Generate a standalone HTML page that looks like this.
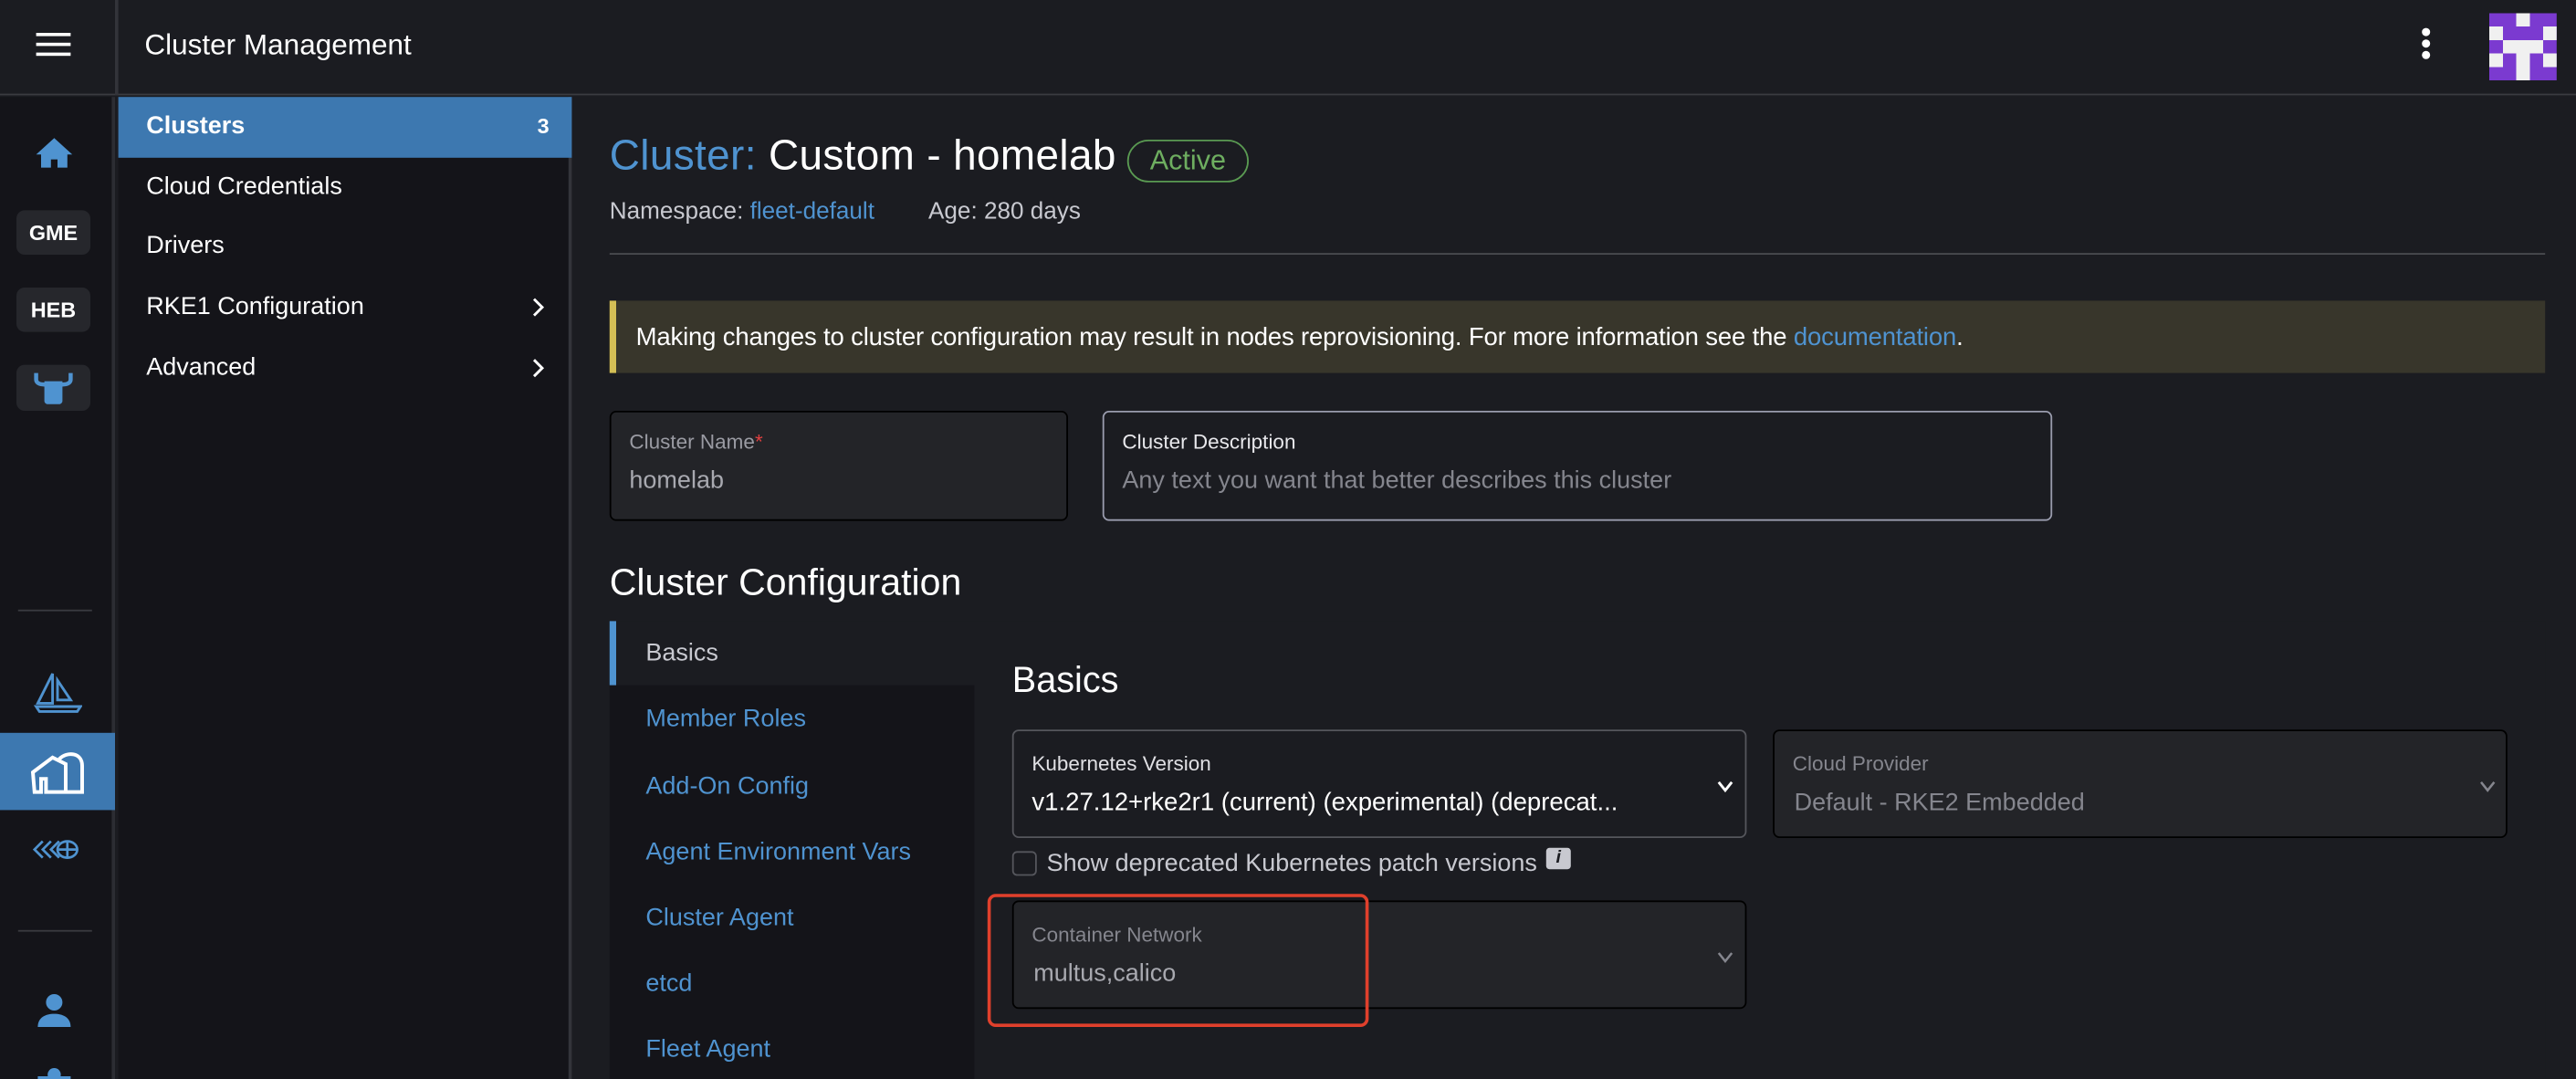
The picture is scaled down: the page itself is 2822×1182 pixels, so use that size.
<!DOCTYPE html>
<html><head><meta charset="utf-8"><style>
*{box-sizing:border-box;margin:0;padding:0}
html,body{width:2822px;height:1182px;overflow:hidden;background:#1b1c21}
#w{width:1568px;height:657px;transform:scale(1.8);transform-origin:0 0;position:relative;font-family:"Liberation Sans",sans-serif;color:#fff;background:#1b1c21}
.a{position:absolute}
.hdr{left:0;top:0;width:1568px;height:58px;background:#1b1c21;border-bottom:1px solid #3a3b40}
.lc{left:0;top:59px;width:70px;height:598px;background:#141419;border-right:2px solid #2c2d33}
.sn{left:72px;top:59px;width:276px;height:598px;background:#141419;border-right:2px solid #33343a}
.it{left:17px;font-size:15px;color:#fff}
.badge{left:10px;width:45px;height:27px;background:#26272c;border-radius:5px;font-size:13px;font-weight:bold;text-align:center;line-height:27px;color:#fff}
.lbl{font-size:12.5px;color:#9a9ba3}
.tab{left:22px;font-size:15px;color:#4f93d0}
</style></head><body><div id="w">
<div class="a hdr"></div>
<div class="a" style="left:70px;top:0;width:2px;height:58px;background:#33343a"></div>
<div class="a" style="left:22px;top:20px;width:21px;height:2px;background:#fff;box-shadow:0 6px 0 #fff,0 12px 0 #fff"></div>
<div class="a" style="left:88px;top:17px;font-size:17.5px">Cluster Management</div>
<div class="a" style="left:1474px;top:17px;width:5px;height:5px;border-radius:50%;background:#fff;box-shadow:0 7px 0 #fff,0 14px 0 #fff"></div>
<svg class="a" style="left:1515px;top:8px" width="41" height="41" viewBox="0 0 5 5" shape-rendering="crispEdges">
<rect width="5" height="5" fill="#7b3ad0"/>
<g fill="#f0f0f0"><rect x="2" y="0" width="1" height="1"/><rect x="0" y="1" width="1" height="1"/><rect x="4" y="1" width="1" height="1"/><rect x="1" y="2" width="3" height="1"/><rect x="0" y="3" width="1" height="1"/><rect x="2" y="3" width="1" height="2"/><rect x="4" y="3" width="1" height="1"/></g></svg>

<div class="a lc"></div>
<svg class="a" style="left:21px;top:83px" width="24" height="20" viewBox="0 0 24 20"><path d="M12 1L1 11h3v8h6v-5h4v5h6v-8h3z" fill="#4f93d0"/></svg>
<div class="a badge" style="top:128px">GME</div>
<div class="a badge" style="top:175px">HEB</div>
<div class="a badge" style="top:222px;height:28px"><svg width="45" height="28" viewBox="0 0 45 28"><path d="M17 10h11v12c0 1-1 2-2 2h-7c-1 0-2-1-2-2z" fill="#4f93d0"/><path d="M12 5v4c0 2 2 3 5 3h11c3 0 5-1 5-3V5" fill="none" stroke="#4f93d0" stroke-width="2.5"/></svg></div>
<div class="a" style="left:11px;top:371px;width:45px;height:1px;background:#3a3b40"></div>
<svg class="a" style="left:20px;top:406px" width="30" height="28" viewBox="0 0 30 28" fill="none" stroke="#4f93d0" stroke-width="1.6"><path d="M3 22L12 4v18zM15 8l8 12h-8zM2 24h27l-2 3H4z"/></svg>
<div class="a" style="left:0;top:446px;width:70px;height:47px;background:#3d78b0"></div>
<svg class="a" style="left:18px;top:456px" width="36" height="28" viewBox="0 0 36 28" fill="none" stroke="#fff" stroke-width="2.2"><path d="M2 14L14 5l8 4v17H10v-8H7v8H3zM18 6c5-5 14-4 14 4v16H22"/></svg>
<svg class="a" style="left:20px;top:510px" width="28" height="14" viewBox="0 0 28 14" fill="none" stroke="#4f93d0" stroke-width="1.5"><path d="M6 2L1 7l5 5M11 2L6 7l5 5M16 2l-5 5 5 5"/><ellipse cx="21" cy="7" rx="6" ry="5"/><path d="M15 7h12M21 2v10"/></svg>
<div class="a" style="left:11px;top:566px;width:45px;height:1px;background:#3a3b40"></div>
<svg class="a" style="left:22px;top:604px" width="22" height="22" viewBox="0 0 22 22" fill="#4f93d0"><circle cx="11" cy="6" r="5"/><path d="M1 21c0-6 5-8 10-8s10 2 10 8z"/></svg>
<svg class="a" style="left:22px;top:649px" width="22" height="10" viewBox="0 0 22 10" fill="#4f93d0"><circle cx="11" cy="5" r="4"/><rect x="1" y="6" width="20" height="4"/></svg>

<div class="a sn"></div>
<div class="a" style="left:72px;top:59px;width:276px;height:37px;background:#3d78b0"></div>
<div class="a it" style="left:89px;top:68px;font-weight:bold">Clusters</div>
<div class="a" style="left:327px;top:69px;font-size:13px;font-weight:bold">3</div>
<div class="a it" style="left:89px;top:105px">Cloud Credentials</div>
<div class="a it" style="left:89px;top:141px">Drivers</div>
<div class="a it" style="left:89px;top:178px">RKE1 Configuration</div>
<div class="a it" style="left:89px;top:215px">Advanced</div>
<svg class="a" style="left:323px;top:181px" width="10" height="12" viewBox="0 0 10 12" fill="none" stroke="#fff" stroke-width="1.6"><path d="M2 1l5 5-5 5"/></svg>
<svg class="a" style="left:323px;top:218px" width="10" height="12" viewBox="0 0 10 12" fill="none" stroke="#fff" stroke-width="1.6"><path d="M2 1l5 5-5 5"/></svg>

<div class="a" style="left:371px;top:81px;font-size:25.5px;letter-spacing:0.2px"><span style="color:#4f93d0">Cluster:</span> Custom - homelab</div>
<div class="a" style="left:686px;top:85px;width:74px;height:26px;border:1.5px solid #5a9a52;border-radius:13px;color:#6eae60;font-size:17px;text-align:center;line-height:23px">Active</div>
<div class="a" style="left:371px;top:121px;font-size:14.5px;color:#c8c9d0">Namespace: <span style="color:#4f93d0">fleet-default</span></div>
<div class="a" style="left:565px;top:121px;font-size:14.5px;color:#c8c9d0">Age: 280 days</div>
<div class="a" style="left:371px;top:154px;width:1178px;height:1px;background:#4a4b50"></div>
<div class="a" style="left:371px;top:183px;width:1178px;height:44px;background:#38362b;border-left:4px solid #d4bf55"></div>
<div class="a" style="left:387px;top:197px;font-size:15.3px;letter-spacing:-0.1px">Making changes to cluster configuration may result in nodes reprovisioning. For more information see the <span style="color:#4f93d0">documentation</span>.</div>

<div class="a" style="left:371px;top:250px;width:279px;height:67px;background:#232428;border:1px solid #000;border-radius:4px"></div>
<div class="a lbl" style="left:383px;top:262px">Cluster Name<span style="color:#e04040">*</span></div>
<div class="a" style="left:383px;top:284px;font-size:15px;color:#a8a9b0">homelab</div>
<div class="a" style="left:671px;top:250px;width:578px;height:67px;border:1px solid #9a9cae;border-radius:4px"></div>
<div class="a" style="left:683px;top:262px;font-size:12.5px;color:#e8e8ec">Cluster Description</div>
<div class="a" style="left:683px;top:284px;font-size:15px;color:#85868e">Any text you want that better describes this cluster</div>

<div class="a" style="left:371px;top:341px;font-size:22.8px">Cluster Configuration</div>
<div class="a" style="left:371px;top:378px;width:1178px;height:279px;background:#1b1c21"></div>
<div class="a" style="left:371px;top:417px;width:222px;height:240px;background:#141419"></div>
<div class="a" style="left:371px;top:378px;width:4px;height:39px;background:#4f93d0"></div>
<div class="a" style="left:393px;top:389px;font-size:15px;color:#c8c9d0">Basics</div>
<div class="a tab" style="left:393px;top:429px">Member Roles</div>
<div class="a tab" style="left:393px;top:470px">Add-On Config</div>
<div class="a tab" style="left:393px;top:510px">Agent Environment Vars</div>
<div class="a tab" style="left:393px;top:550px">Cluster Agent</div>
<div class="a tab" style="left:393px;top:590px">etcd</div>
<div class="a tab" style="left:393px;top:630px">Fleet Agent</div>

<div class="a" style="left:616px;top:401px;font-size:22px">Basics</div>
<div class="a" style="left:616px;top:444px;width:447px;height:66px;border:1px solid #55565c;border-radius:4px"></div>
<div class="a" style="left:628px;top:458px;font-size:12.5px;color:#e0e0e4">Kubernetes Version</div>
<div class="a" style="left:628px;top:480px;font-size:15.3px">v1.27.12+rke2r1 (current) (experimental) (deprecat...</div>
<svg class="a" style="left:1044px;top:474px" width="12" height="10" viewBox="0 0 12 10" fill="none" stroke="#fff" stroke-width="1.6"><path d="M2 2l4 5 4-5"/></svg>
<div class="a" style="left:1079px;top:444px;width:447px;height:66px;background:#232428;border:1px solid #000;border-radius:4px"></div>
<div class="a lbl" style="left:1091px;top:458px;color:#85868e">Cloud Provider</div>
<div class="a" style="left:1092px;top:480px;font-size:15px;color:#85868e">Default - RKE2 Embedded</div>
<svg class="a" style="left:1508px;top:474px" width="12" height="10" viewBox="0 0 12 10" fill="none" stroke="#85868e" stroke-width="1.4"><path d="M2 2l4 5 4-5"/></svg>
<div class="a" style="left:616px;top:518px;width:15px;height:15px;border:1px solid #55565c;border-radius:3px"></div>
<div class="a" style="left:637px;top:517px;font-size:15px;color:#c8c9d0">Show deprecated Kubernetes patch versions</div>
<div class="a" style="left:941px;top:516px;width:15px;height:13px;background:#c8c9d0;border-radius:2px;color:#1b1c21;font-size:11px;font-weight:bold;font-style:italic;text-align:center;line-height:13px">i</div>
<div class="a" style="left:616px;top:548px;width:447px;height:66px;background:#232428;border:1px solid #000;border-radius:4px"></div>
<div class="a lbl" style="left:628px;top:562px;color:#85868e">Container Network</div>
<div class="a" style="left:629px;top:584px;font-size:15px;color:#a8a9b0">multus,calico</div>
<svg class="a" style="left:1044px;top:578px" width="12" height="10" viewBox="0 0 12 10" fill="none" stroke="#85868e" stroke-width="1.4"><path d="M2 2l4 5 4-5"/></svg>
<div class="a" style="left:601px;top:544px;width:232px;height:81px;border:2.5px solid #e0402c;border-radius:5px"></div>
</div></body></html>
